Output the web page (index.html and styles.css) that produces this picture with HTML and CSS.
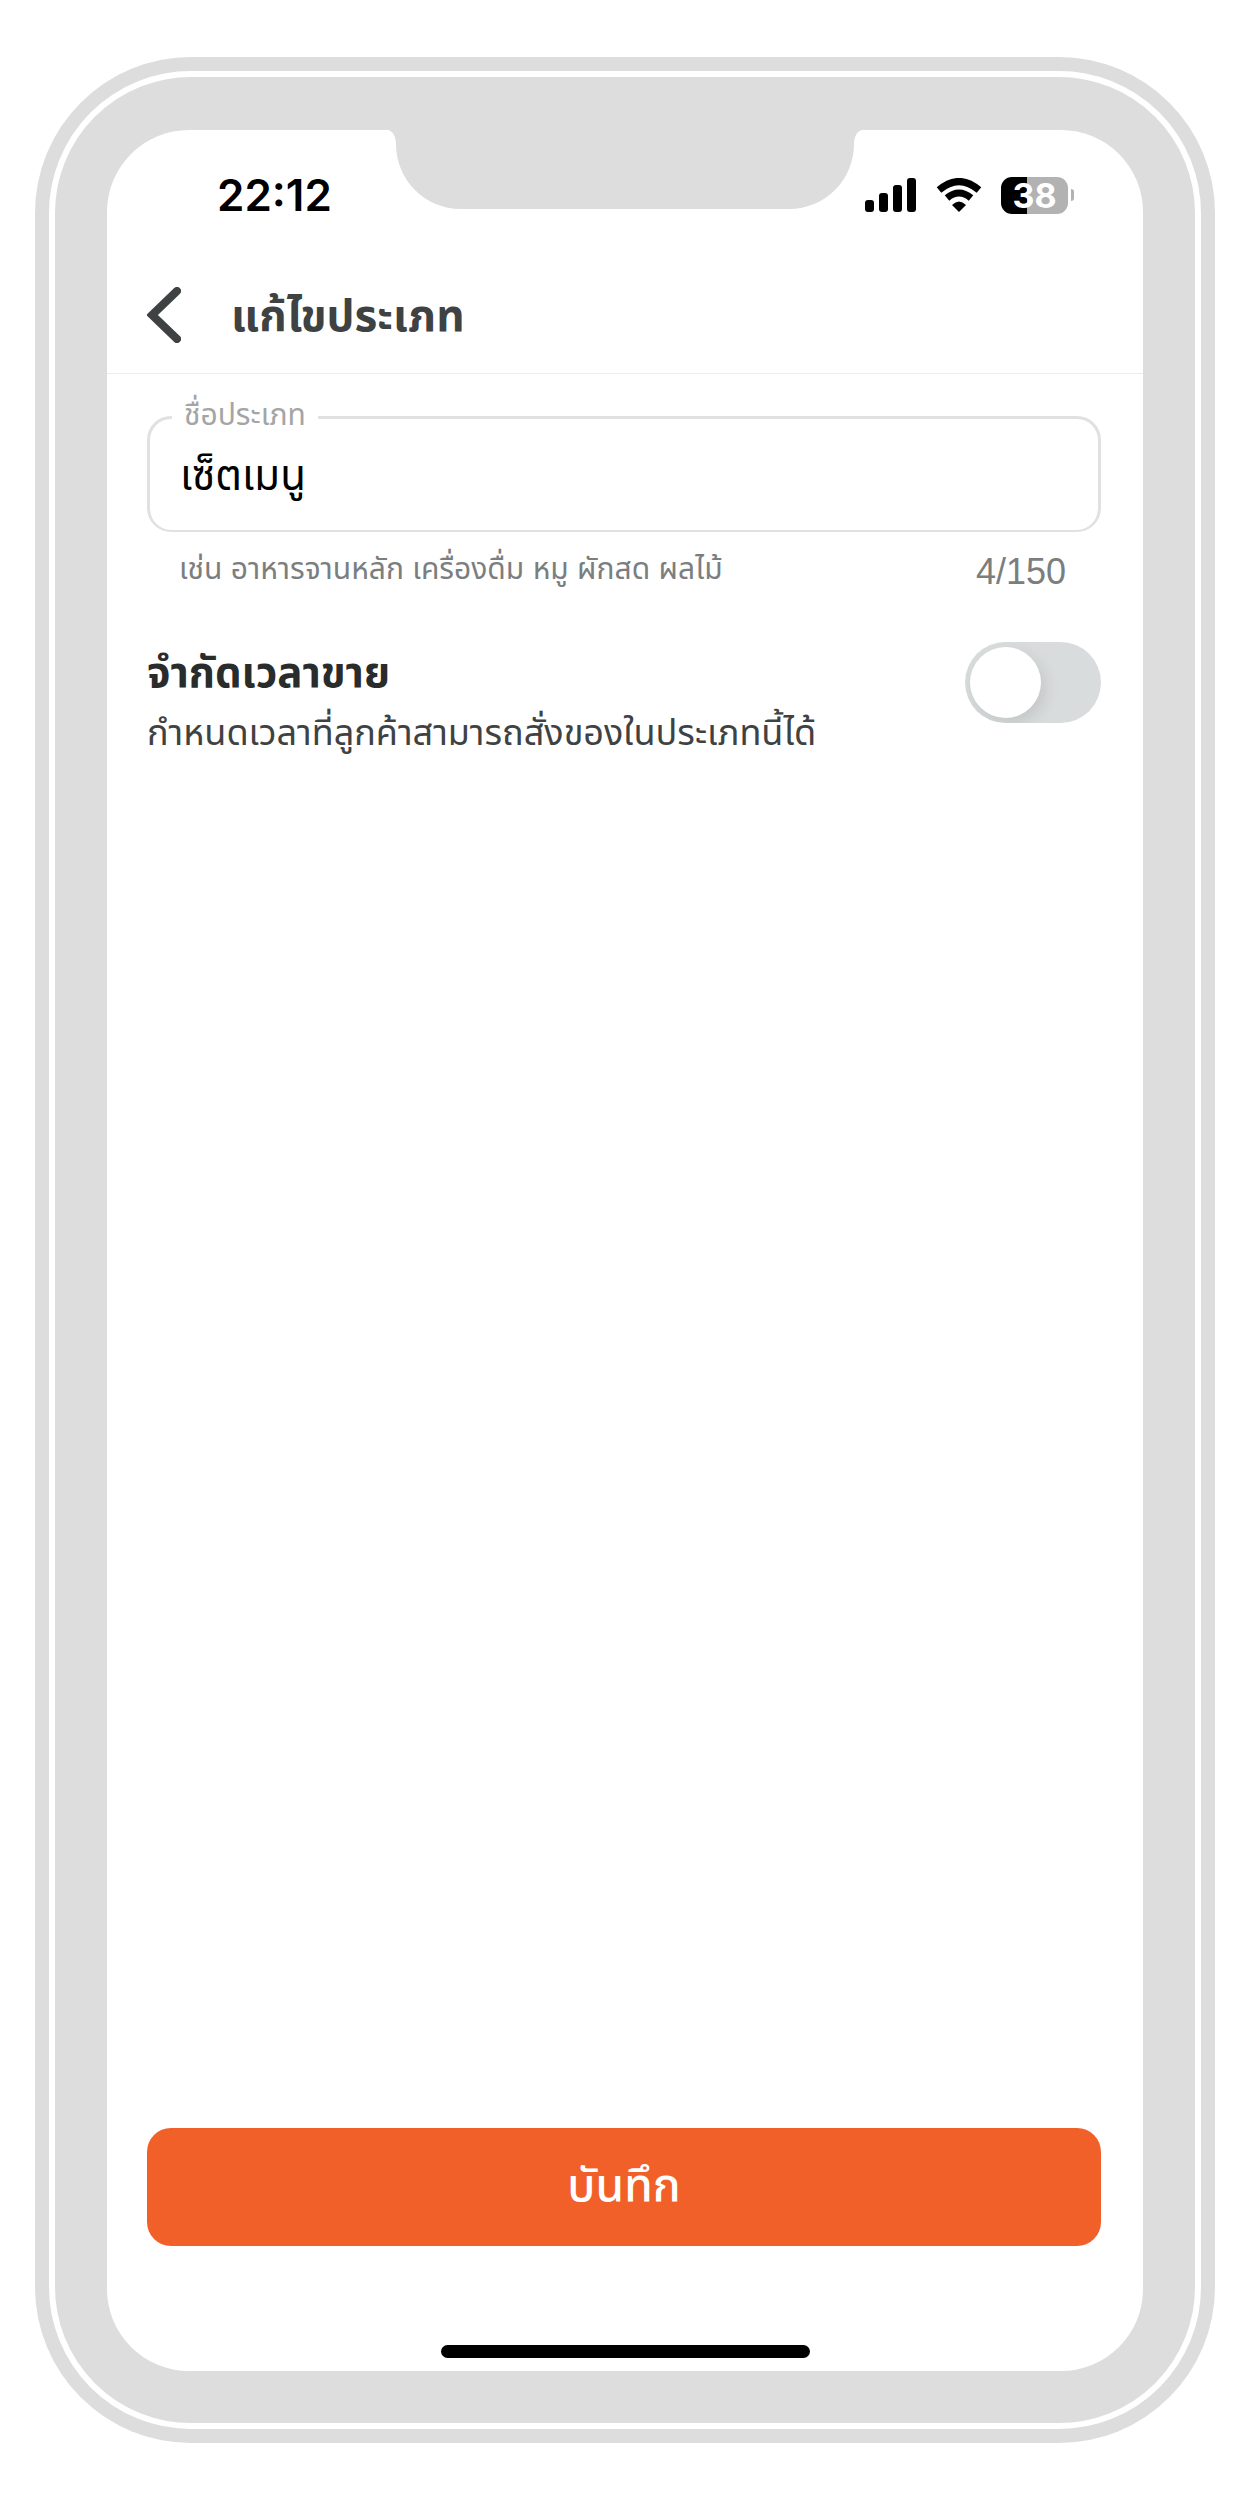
FILE: index.html
```html
<!DOCTYPE html>
<html lang="th">
<head>
<meta charset="utf-8">
<meta name="viewport" content="width=device-width, initial-scale=1">
<title>แก้ไขประเภท</title>
<link rel="stylesheet" href="styles.css">
</head>
<body>
<div class="phone">
  <div class="bezel">
    <div class="screen">
      <svg class="notch" viewBox="0 0 474 79" aria-hidden="true"><path d="M0 0H474C469 1 466 7 466 14C466 50 437 79 401 79H73C37 79 8 50 8 14C8 7 5 1 0 0Z"/></svg>
      <div class="status">
        <time class="clock">22:12</time>
        <div class="indicators">
          <svg class="signal" viewBox="0 0 52 34" aria-hidden="true"><rect y="22" width="9" height="12" rx="3"/><rect x="14" y="15" width="9" height="19" rx="3"/><rect x="28" y="7" width="9" height="27" rx="3"/><rect x="42" y="0" width="9" height="34" rx="3"/></svg>
          <svg class="wifi" viewBox="0 0 46 34" aria-hidden="true"><path d="M3 12Q23-5 43 12" /><path d="M11 20Q23 10 35 20"/><path class="wifi-dot" d="M16 27Q23 20 30 27L23 34Z"/></svg>
          <div class="battery"><span class="battery-level">38</span><span class="battery-cap"></span></div>
        </div>
      </div>
      <header class="header">
        <button class="back" type="button" aria-label="ย้อนกลับ"><svg viewBox="0 0 34 56" aria-hidden="true"><path d="M30 4L5 28L30 52"/></svg></button>
        <h1 class="title">แก้ไขประเภท</h1>
      </header>
      <form class="form">
        <fieldset class="field">
          <legend class="legend"><label for="name">ชื่อประเภท</label></legend>
          <input class="input" id="name" type="text" value="เซ็ตเมนู" maxlength="150">
        </fieldset>
        <div class="hint">
          <span class="hint-text">เช่น อาหารจานหลัก เครื่องดื่ม หมู ผักสด ผลไม้</span>
          <span class="counter">4/150</span>
        </div>
        <div class="limit">
          <label class="limit-text" for="limit">
            <strong class="limit-title">จำกัดเวลาขาย</strong>
            <span class="limit-note">กำหนดเวลาที่ลูกค้าสามารถสั่งของในประเภทนี้ได้</span>
          </label>
          <input class="switch" id="limit" type="checkbox" role="switch">
        </div>
        <button class="save" type="submit">บันทึก</button>
      </form>
      <div class="home"></div>
    </div>
  </div>
</div>
</body>
</html>
```
FILE: styles.css
```css
* { box-sizing: border-box; }

body {
  margin: 0;
  background: #fff;
  color: #3f4243;
  font-family: Inter, "Noto Sans Thai", "Noto Sans", sans-serif;
}

.phone {
  display: flex;
  min-height: calc(100vh - 114px);
  margin: 57px 35px;
  padding: 14px;
  border-radius: 156px;
  background: #ddd;
}

.bezel {
  display: flex;
  flex: 1;
  padding: 53px 52px 52px;
  border: 6px solid #fff;
  border-radius: 142px;
}

.screen {
  position: relative;
  display: flex;
  flex: 1;
  flex-direction: column;
  min-width: 0;
  border-radius: 82px;
  background: #fff;
}

.notch {
  position: absolute;
  top: 0;
  left: 50%;
  width: 474px;
  height: 79px;
  transform: translateX(-50%);
  fill: #ddd;
}

.status {
  display: flex;
  align-items: center;
  justify-content: space-between;
  height: 130px;
  padding: 0 69px 0 110px;
  color: #000;
}

.clock { font-size: 44px; font-weight: 600; }

.indicators { display: flex; align-items: center; gap: 19px; }
.signal { width: 52px; height: 34px; }
.wifi { width: 46px; height: 34px; fill: none; stroke: #000; stroke-width: 7; }
.wifi-dot { fill: #000; stroke: none; }

.battery { display: flex; align-items: center; gap: 3px; }
.battery-level {
  width: 67px;
  border-radius: 11px;
  background: linear-gradient(to right, #000 39%, #b2b2b2 39%);
  color: #fff;
  font-size: 34px;
  font-weight: 700;
  line-height: 37px;
  text-align: center;
}
.battery-cap { width: 3px; height: 12px; border-radius: 0 6px 6px 0; background: #b2b2b2; }

.header {
  display: flex;
  align-items: center;
  gap: 50px;
  height: 114px;
  padding: 0 40px 4px;
  border-bottom: 1px solid #ececec;
}
.back { padding: 0; border: 0; background: none; }
.back svg { display: block; width: 34px; height: 56px; fill: none; stroke: #3f4243; stroke-width: 8; stroke-linecap: round; }
.title { margin: 0; font-size: 44px; font-weight: 700; line-height: 60px; }

.form {
  display: flex;
  flex: 1;
  flex-direction: column;
  padding: 20px 42px 0 40px;
}

.field {
  min-width: 0;
  margin: 0;
  padding: 0 30px 16px;
  border: 3px solid #e0e1e1;
  border-bottom-width: 2px;
  border-radius: 24px;
}
.legend { margin-left: -8px; padding: 0 12px 6px; color: #a3a5a6; font-size: 30px; line-height: 40px; }
.input { display: block; width: 100%; height: 74px; padding: 0; border: 0; outline: 0; background: none; color: #000; font: inherit; font-size: 42px; }

.hint {
  display: flex;
  justify-content: space-between;
  padding: 12px 35px 0 32px;
  color: #7b7e7f;
  font-size: 30px;
  line-height: 56px;
}
.hint-text { line-height: 48px; }
.counter { font-family: "Liberation Sans", sans-serif; font-size: 36px; }

.limit { display: flex; align-items: flex-start; justify-content: space-between; padding-top: 42px; }
.limit-title, .limit-note { display: block; line-height: 60px; }
.limit-title { color: #2a2c2c; font-size: 42px; }
.limit-note { font-size: 36px; }

.switch {
  display: flex;
  flex: none;
  width: 136px;
  height: 81px;
  margin: 0;
  padding: 5px;
  overflow: hidden;
  border-radius: 41px;
  background: #d9dcdd;
  appearance: none;
}
.switch::before {
  width: 71px;
  height: 71px;
  border-radius: 50%;
  background: #fff;
  box-shadow: 4px 6px 16px rgba(0, 0, 0, .1);
  content: "";
}
.switch:checked { justify-content: flex-end; background: #f26029; }

.save {
  height: 118px;
  margin-top: auto;
  border: 0;
  border-radius: 24px;
  background: #f26029;
  color: #fff;
  font: inherit;
  font-size: 46px;
  font-weight: 500;
}

.home { width: 369px; height: 13px; margin: 99px auto 13px; border-radius: 7px; background: #000; }
```
